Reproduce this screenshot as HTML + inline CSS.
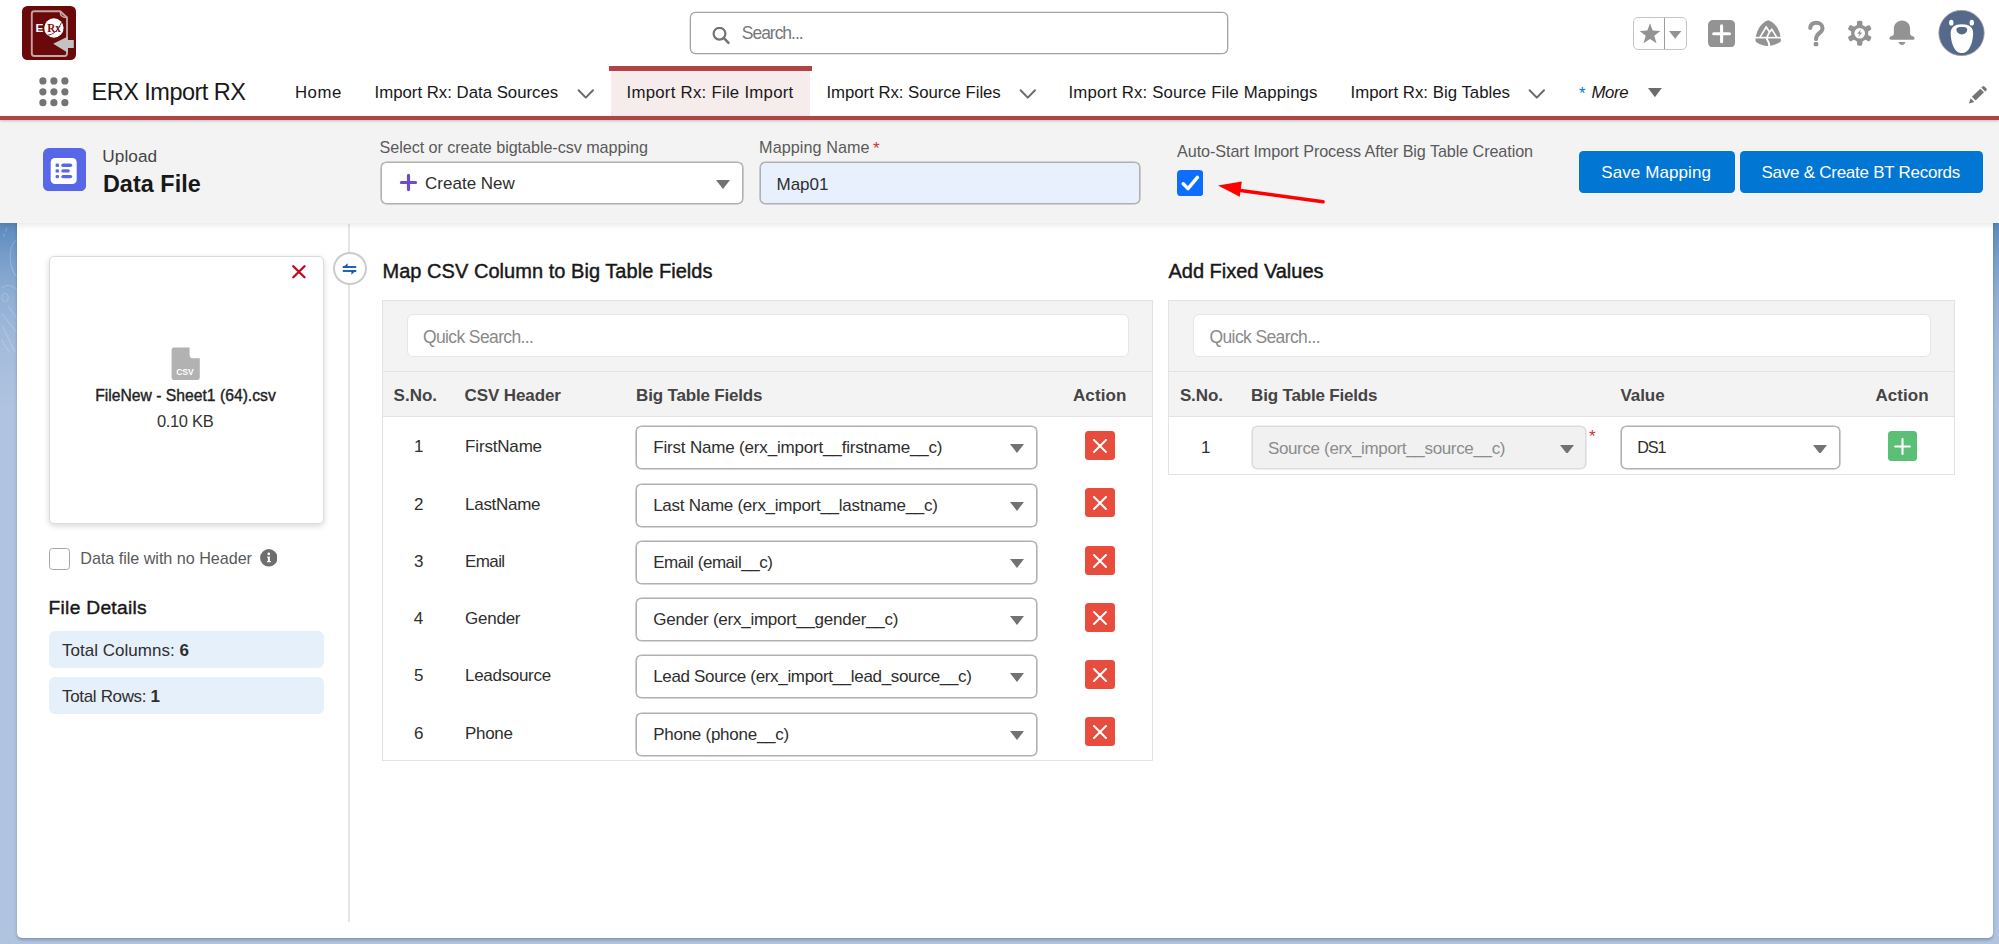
<!DOCTYPE html>
<html lang="en">
<head>
<meta charset="utf-8">
<title>ERX Import RX - File Import</title>
<style>
*{box-sizing:border-box;margin:0;padding:0}
html,body{width:1999px;height:944px;overflow:hidden}
body{position:relative;font-family:"Liberation Sans",sans-serif;background:linear-gradient(180deg,#5a8abd 224px,#789ecb 258px,#92b0d5 300px,#a5bcdc 350px,#b0c4e0 410px,#b0c4e0 100%)}
.abs,.t,svg.i{position:absolute}
.t{white-space:pre;line-height:normal;display:block}
/* global header */
#gh{position:absolute;left:0;top:0;width:1999px;height:117px;background:#fff}
#gsearch{position:absolute;left:690px;top:12px;width:537.700px;height:41.600px;border:1px solid #a2a2a2;border-radius:5.500px;background:#fff;box-shadow:0 0 0 .3px #a2a2a2}
#fav{position:absolute;left:1633px;top:16.5px;width:54px;height:33px;border:1px solid #c4c4c4;border-radius:5px}
#fav b{position:absolute;left:30px;top:0;width:1.2px;height:31px;background:#9c9c9c}
#navline{position:absolute;left:0;top:116.300px;width:1999px;height:3.700px;background:#b04346;box-shadow:0 1px 3px rgba(0,0,0,.22)}
#tabon{position:absolute;left:610.800px;top:66.200px;width:199.200px;height:50.500px;background:#f6ecec}
#tabon:before{content:'';position:absolute;left:-1.800px;top:0;width:202.800px;height:4.700px;background:#b04346}
/* page header */
#ph{position:absolute;left:0;top:120px;width:1999px;height:103.300px;background:#f3f3f3;box-shadow:0 2px 6px rgba(0,0,0,.1)}
.sel{position:absolute;height:42.700px;border:1px solid #b0b0b0;border-radius:5.5px;background:#fff;box-shadow:0 0 0 .6px #b0b0b0}
.sel.dis{background:#f1f1f1;border-color:#dcdcdc;box-shadow:0 0 0 .6px #dcdcdc}
.btn{position:absolute;top:150.5px;height:42px;background:#0176d3;border-radius:4.5px}
/* main card */
#card{position:absolute;left:16.5px;top:120px;width:1976.5px;height:818.3px;background:#fff;border-radius:0 0 5px 5px;box-shadow:0 2px 3px rgba(45,55,85,.32)}
#vline{position:absolute;left:348px;top:223.500px;width:2px;height:698.500px;background:#e5e5e5}
#filebox{position:absolute;left:49px;top:256px;width:275px;height:268px;background:#fff;border:1px solid #dcdcdc;border-radius:5px;box-shadow:0 2px 6px rgba(0,0,0,.16)}
#toggle{position:absolute;left:333px;top:252px;width:34px;height:33px;border:2.2px solid #cbcbcb;border-radius:50%;background:#fff}
.chk{position:absolute;border-radius:3.5px}
.pill{position:absolute;left:48.5px;width:275.5px;height:37px;background:#e5f0fb;border-radius:6px}
.panel{position:absolute;top:299.5px;border:1px solid #e3e3e3;background:#fff}
.panel .hd{position:absolute;left:0;top:0;right:0;height:116.6px;background:#f3f3f3;border-bottom:1px solid #e3e3e3}
.panel .hd i{position:absolute;left:0;right:0;top:70.5px;height:1px;background:#e3e3e3}
.qs{position:absolute;top:13px;height:43.400px;background:#fff;border:1px solid #e6e6e6;border-radius:6px}
.xbtn{position:absolute;left:1085px;width:29.5px;height:29.3px;background:#e74c3c;border-radius:3.500px}
.pbtn{position:absolute;left:1887.8px;top:431.3px;width:29.5px;height:29.4px;background:#5bbf76;border-radius:3.500px}
.sb{-webkit-text-stroke:.42px currentColor}
.sb2{-webkit-text-stroke:.38px currentColor}

</style>
</head>
<body>
<svg class="i" style="left:0;top:223px" width="17" height="180" viewBox="0 223 17 180" aria-hidden="true"><g fill="none" stroke="#fff" stroke-opacity=".2" stroke-width="1.100" stroke-linecap="round">
 <path d="M6.800 228 L6 231.500 M4.600 234 L3.600 236.500"/>
 <path d="M16.500 240 C10 244 8.500 258 12 268 C13.500 272.500 15 275 16.500 276.500"/>
 <path d="M2 288 C6 284 11 285 16.500 289"/>
 <ellipse cx="5" cy="297.500" rx="3.200" ry="4"/>
 <path d="M2 314 L16.500 332 M2.500 326 L15 352 M8 306 L16.500 318 M1.500 340 L9 352"/>
</g></svg><main id="card"></main>
<aside id="left">
 <div id="filebox">
  <svg class="i" style="left:242.200px;top:8.400px" width="13.800" height="13.600" viewBox="0 0 13.800 13.600"><path d="M1.300 1.300 L12.500 12.300 M12.500 1.300 L1.300 12.300" stroke="#c4061f" stroke-width="2.300" stroke-linecap="round"/></svg>
  <svg class="i" style="left:121px;top:90.300px" width="29.400" height="33.600" viewBox="0 0 29.400 33.200" preserveAspectRatio="none">
   <path d="M3 0.600 H18.600 V7.600 Q18.600 11.200 22.200 11.200 H28.800 V30 Q28.800 32.600 26.200 32.600 H3.200 Q0.600 32.600 0.600 30 V3 Q0.600 0.600 3 0.600 Z" fill="#b2b2b2"/>
   <text x="5.200" y="28" font-family="Liberation Sans, sans-serif" font-weight="700" font-size="9.600" fill="#fff" textLength="17.600" lengthAdjust="spacingAndGlyphs">CSV</text>
  </svg>
 </div>
 <span class="t sb2" style="left:95.2px;top:386.6px;font-size:15.7px;color:#222222;letter-spacing:0.005px;">FileNew - Sheet1 (64).csv</span>
 <span class="t" style="left:156.9px;top:411.8px;font-size:16.5px;color:#333333;letter-spacing:-0.320px;">0.10 KB</span>
 <i class="chk" style="left:48.500px;top:548px;width:21.400px;height:21.600px;border:1px solid #a6a6a6;background:#fff"></i>
 <span class="t" style="left:80.3px;top:549.0px;font-size:16.2px;color:#5a5a5a;letter-spacing:-0.046px;">Data file with no Header</span>
 <svg class="i" style="left:259.800px;top:549.400px" width="17.600" height="17.600" viewBox="0 0 17.600 17.600"><circle cx="8.800" cy="8.800" r="8.700" fill="#6e6e6e"/><circle cx="8.800" cy="4.900" r="1.350" fill="#fff"/><path d="M7.200 7.500 H9.900 V12 H10.800 V13.300 H7 V12 H7.900 V8.800 H7.200 Z" fill="#fff"/></svg>
 <span class="t sb" style="left:48.5px;top:597.2px;font-size:19.2px;color:#181818;letter-spacing:0.299px;">File Details</span>
 <div class="pill" style="top:631.300px"></div>
 <span class="t" style="left:62.1px;top:641.2px;font-size:17px;color:#2e2e2e;letter-spacing:0.011px;">Total Columns: <b>6</b></span>
 <div class="pill" style="top:676.800px"></div>
 <span class="t" style="left:62.1px;top:686.8px;font-size:17px;color:#2e2e2e;letter-spacing:-0.347px;">Total Rows: <b>1</b></span>
</aside>
<div id="vline"></div>
<div id="toggle">
 <svg class="i" style="left:7.400px;top:9px" width="15" height="12" viewBox="0 0 15 12"><g stroke="#1b5cb0" stroke-width="1.900" fill="none"><path d="M0.800 4 H14.200"/><path d="M0.800 8 H14.200"/></g><path d="M0.400 4.900 L5.600 0.300 V4.900 Z M14.600 7.100 L9.400 11.700 V7.100 Z" fill="#1b5cb0"/></svg>
</div>

<section id="map">
 <span class="t sb" style="left:382.5px;top:260.2px;font-size:20px;color:#181818;letter-spacing:0.040px;">Map CSV Column to Big Table Fields</span>
 <div class="panel" style="left:382px;width:770.500px;height:461.600px">
  <div class="hd"><i></i><div class="qs" style="left:23.800px;width:722.500px"></div></div>
 </div>
 <span class="t" style="left:422.9px;top:326.6px;font-size:17.5px;color:#8a8a8a;letter-spacing:-0.610px;">Quick Search...</span>
 <span class="t" style="left:393.5px;top:385.6px;font-size:17px;color:#444444;font-weight:700;letter-spacing:0.037px;">S.No.</span>
 <span class="t" style="left:464.5px;top:385.6px;font-size:17px;color:#444444;font-weight:700;letter-spacing:-0.103px;">CSV Header</span>
 <span class="t" style="left:636.1px;top:385.6px;font-size:17px;color:#444444;font-weight:700;letter-spacing:-0.180px;">Big Table Fields</span>
 <span class="t" style="left:1072.9px;top:385.6px;font-size:17px;color:#444444;font-weight:700;letter-spacing:0.142px;">Action</span>
 
 <div class="row">
  <span class="t" style="left:413.9px;top:437.2px;font-size:17px;color:#2e2e2e;letter-spacing:-2.469px;">1</span>
  <span class="t" style="left:465.1px;top:437.2px;font-size:17px;color:#2e2e2e;letter-spacing:-0.176px;">FirstName</span>
  <div class="sel" style="left:636px;top:426px;width:401.400px"></div>
  <span class="t" style="left:653.2px;top:438.4px;font-size:17px;color:#2e2e2e;letter-spacing:-0.178px;">First Name (erx_import__firstname__c)</span>
  <svg class="i" style="left:1010.4px;top:444.4px" width="14" height="8.9" viewBox="0 0 14 8.9"><path d="M0 0 H14 L7.0 8.9 Z" fill="#727272"/></svg>
  <div class="xbtn" style="top:431.2px"><svg class="i" style="left:8.300px;top:8.300px" width="14" height="14" viewBox="0 0 14 14"><path d="M1 1 L13 13 M13 1 L1 13" stroke="#fff" stroke-width="2" stroke-linecap="round"/></svg></div>
 </div>
 <div class="row">
  <span class="t" style="left:414.1px;top:495.2px;font-size:17px;color:#2e2e2e;letter-spacing:-0.869px;">2</span>
  <span class="t" style="left:465.1px;top:495.2px;font-size:17px;color:#2e2e2e;letter-spacing:-0.298px;">LastName</span>
  <div class="sel" style="left:636px;top:484px;width:401.400px"></div>
  <span class="t" style="left:653.2px;top:496.4px;font-size:17px;color:#2e2e2e;letter-spacing:-0.269px;">Last Name (erx_import__lastname__c)</span>
  <svg class="i" style="left:1010.4px;top:502.4px" width="14" height="8.9" viewBox="0 0 14 8.9"><path d="M0 0 H14 L7.0 8.9 Z" fill="#727272"/></svg>
  <div class="xbtn" style="top:488.2px"><svg class="i" style="left:8.300px;top:8.300px" width="14" height="14" viewBox="0 0 14 14"><path d="M1 1 L13 13 M13 1 L1 13" stroke="#fff" stroke-width="2" stroke-linecap="round"/></svg></div>
 </div>
 <div class="row">
  <span class="t" style="left:414.1px;top:552.2px;font-size:17px;color:#2e2e2e;letter-spacing:-0.869px;">3</span>
  <span class="t" style="left:465.1px;top:552.2px;font-size:17px;color:#2e2e2e;letter-spacing:-0.629px;">Email</span>
  <div class="sel" style="left:636px;top:541px;width:401.400px"></div>
  <span class="t" style="left:653.2px;top:553.4px;font-size:17px;color:#2e2e2e;letter-spacing:-0.453px;">Email (email__c)</span>
  <svg class="i" style="left:1010.4px;top:559.4px" width="14" height="8.9" viewBox="0 0 14 8.9"><path d="M0 0 H14 L7.0 8.9 Z" fill="#727272"/></svg>
  <div class="xbtn" style="top:545.5px"><svg class="i" style="left:8.300px;top:8.300px" width="14" height="14" viewBox="0 0 14 14"><path d="M1 1 L13 13 M13 1 L1 13" stroke="#fff" stroke-width="2" stroke-linecap="round"/></svg></div>
 </div>
 <div class="row">
  <span class="t" style="left:413.7px;top:609.2px;font-size:17px;color:#2e2e2e;letter-spacing:-0.269px;">4</span>
  <span class="t" style="left:465.1px;top:609.2px;font-size:17px;color:#2e2e2e;letter-spacing:-0.261px;">Gender</span>
  <div class="sel" style="left:636px;top:598px;width:401.400px"></div>
  <span class="t" style="left:653.2px;top:610.4px;font-size:17px;color:#2e2e2e;letter-spacing:-0.245px;">Gender (erx_import__gender__c)</span>
  <svg class="i" style="left:1010.4px;top:616.4px" width="14" height="8.9" viewBox="0 0 14 8.9"><path d="M0 0 H14 L7.0 8.9 Z" fill="#727272"/></svg>
  <div class="xbtn" style="top:602.5px"><svg class="i" style="left:8.300px;top:8.300px" width="14" height="14" viewBox="0 0 14 14"><path d="M1 1 L13 13 M13 1 L1 13" stroke="#fff" stroke-width="2" stroke-linecap="round"/></svg></div>
 </div>
 <div class="row">
  <span class="t" style="left:414.1px;top:666.2px;font-size:17px;color:#2e2e2e;letter-spacing:-0.869px;">5</span>
  <span class="t" style="left:465.1px;top:666.2px;font-size:17px;color:#2e2e2e;letter-spacing:-0.316px;">Leadsource</span>
  <div class="sel" style="left:636px;top:655px;width:401.400px"></div>
  <span class="t" style="left:653.2px;top:667.4px;font-size:17px;color:#2e2e2e;letter-spacing:-0.333px;">Lead Source (erx_import__lead_source__c)</span>
  <svg class="i" style="left:1010.4px;top:673.4px" width="14" height="8.9" viewBox="0 0 14 8.9"><path d="M0 0 H14 L7.0 8.9 Z" fill="#727272"/></svg>
  <div class="xbtn" style="top:660px"><svg class="i" style="left:8.300px;top:8.300px" width="14" height="14" viewBox="0 0 14 14"><path d="M1 1 L13 13 M13 1 L1 13" stroke="#fff" stroke-width="2" stroke-linecap="round"/></svg></div>
 </div>
 <div class="row">
  <span class="t" style="left:414.1px;top:724.2px;font-size:17px;color:#2e2e2e;letter-spacing:-0.669px;">6</span>
  <span class="t" style="left:465.1px;top:724.2px;font-size:17px;color:#2e2e2e;letter-spacing:-0.343px;">Phone</span>
  <div class="sel" style="left:636px;top:713px;width:401.400px"></div>
  <span class="t" style="left:653.2px;top:725.4px;font-size:17px;color:#2e2e2e;letter-spacing:-0.259px;">Phone (phone__c)</span>
  <svg class="i" style="left:1010.4px;top:731.4px" width="14" height="8.9" viewBox="0 0 14 8.9"><path d="M0 0 H14 L7.0 8.9 Z" fill="#727272"/></svg>
  <div class="xbtn" style="top:716.5px"><svg class="i" style="left:8.300px;top:8.300px" width="14" height="14" viewBox="0 0 14 14"><path d="M1 1 L13 13 M13 1 L1 13" stroke="#fff" stroke-width="2" stroke-linecap="round"/></svg></div>
 </div>
</section>

<section id="fixed">
 <span class="t sb" style="left:1168.5px;top:260.2px;font-size:20px;color:#181818;letter-spacing:-0.019px;">Add Fixed Values</span>
 <div class="panel" style="left:1168.400px;width:786.500px;height:175.400px">
  <div class="hd"><i></i><div class="qs" style="left:23.600px;width:738.400px"></div></div>
 </div>
 <span class="t" style="left:1209.5px;top:326.6px;font-size:17.5px;color:#8a8a8a;letter-spacing:-0.610px;">Quick Search...</span>
 <span class="t" style="left:1179.9px;top:385.6px;font-size:17px;color:#444444;font-weight:700;letter-spacing:-0.113px;">S.No.</span>
 <span class="t" style="left:1251.1px;top:385.6px;font-size:17px;color:#444444;font-weight:700;letter-spacing:-0.180px;">Big Table Fields</span>
 <span class="t" style="left:1620.5px;top:385.6px;font-size:17px;color:#444444;font-weight:700;letter-spacing:-0.080px;">Value</span>
 <span class="t" style="left:1875.5px;top:385.6px;font-size:17px;color:#444444;font-weight:700;letter-spacing:0.062px;">Action</span>
 <span class="t" style="left:1201.1px;top:437.6px;font-size:17px;color:#2e2e2e;letter-spacing:-2.669px;">1</span>
 <div class="sel dis" style="left:1251.600px;top:426px;width:334px"></div>
 <span class="t" style="left:1267.9px;top:438.6px;font-size:17px;color:#8c8c8c;letter-spacing:-0.344px;">Source (erx_import__source__c)</span>
 <svg class="i" style="left:1559.5px;top:444.6px" width="14" height="8.9" viewBox="0 0 14 8.9"><path d="M0 0 H14 L7.0 8.9 Z" fill="#727272"/></svg>
 <span class="t" style="left:1588.9px;top:427.0px;font-size:17px;color:#c23934;">*</span>
 <div class="sel" style="left:1621px;top:426px;width:218.800px"></div>
 <span class="t" style="left:1637.3px;top:438.4px;font-size:16.2px;color:#2e2e2e;letter-spacing:-1.150px;">DS1</span>
 <svg class="i" style="left:1813.2px;top:444.6px" width="14" height="8.9" viewBox="0 0 14 8.9"><path d="M0 0 H14 L7.0 8.9 Z" fill="#727272"/></svg>
 <div class="pbtn"><svg class="i" style="left:6.500px;top:6.600px" width="17" height="17" viewBox="0 0 17 17"><path d="M8.500 1.100 V15.900 M1.100 8.500 H15.900" stroke="#fff" stroke-width="2.100" stroke-linecap="round"/></svg></div>
</section>

<section id="ph">
 
</section>
<div id="phc">
 <svg class="i" style="left:43px;top:147.800px" width="43.200" height="43.200" viewBox="0 0 43.200 43.200">
  <rect width="43.200" height="43.200" rx="6" fill="#5867e8"/>
  <rect x="7.700" y="10" width="26" height="26.100" rx="4.200" fill="#fff"/>
  <g fill="#5867e8"><rect x="12.600" y="15.500" width="3.400" height="3.400" rx="1.200"/><rect x="12.600" y="21.200" width="3.400" height="3.400" rx="1.200"/><rect x="12.600" y="26.900" width="3.400" height="3.400" rx="1.200"/>
  <rect x="18.300" y="15.500" width="10.900" height="3.400" rx="1.700"/><rect x="18.300" y="21.200" width="8.500" height="3.400" rx="1.700"/><rect x="18.300" y="26.900" width="10.900" height="3.400" rx="1.700"/></g>
 </svg>
 <span class="t" style="left:102.3px;top:145.8px;font-size:17.2px;color:#444444;letter-spacing:0.066px;">Upload</span>
 <span class="t" style="left:102.9px;top:171.0px;font-size:23.4px;color:#181818;font-weight:700;letter-spacing:0.050px;">Data File</span>

 <span class="t" style="left:379.5px;top:137.5px;font-size:16.2px;color:#5a5a5a;letter-spacing:-0.068px;">Select or create bigtable-csv mapping</span>
 <div class="sel" style="left:381px;top:161.600px;width:362.200px">
  <svg class="i" style="left:17.200px;top:10.800px" width="19" height="19" viewBox="0 0 19 19"><path d="M9.500 2.400 V16.600 M2.400 9.500 H16.600" stroke="#6b4fc8" stroke-width="3.200" stroke-linecap="round"/></svg>
 </div>
 <span class="t" style="left:425.1px;top:174.4px;font-size:17px;color:#2e2e2e;">Create New</span>
 <svg class="i" style="left:716.4px;top:180.2px" width="14" height="8.9" viewBox="0 0 14 8.9"><path d="M0 0 H14 L7.0 8.9 Z" fill="#727272"/></svg>

 <span class="t" style="left:759.1px;top:137.5px;font-size:16.2px;color:#5a5a5a;letter-spacing:0.056px;">Mapping Name</span>
 <span class="t" style="left:872.9px;top:138.6px;font-size:17px;color:#c23934;">*</span>
 <div class="sel" style="left:759.700px;top:161.600px;width:380.100px;background:#e8f0fe"></div>
 <span class="t" style="left:776.5px;top:175.0px;font-size:17px;color:#2e2e2e;">Map01</span>

 <span class="t" style="left:1177.1px;top:142.2px;font-size:16.2px;color:#5a5a5a;letter-spacing:-0.092px;">Auto-Start Import Process After Big Table Creation</span>
 <svg class="i" style="left:1176.600px;top:169.600px" width="26.400" height="26.200" viewBox="0 0 26.400 26.200"><rect width="26.400" height="26.200" rx="4" fill="#0d6efd"/><path d="M6.200 13.800 L11 18.600 L20.400 7.400" fill="none" stroke="#fff" stroke-width="3.400" stroke-linecap="round" stroke-linejoin="round"/></svg>
 <!-- red annotation arrow -->
 <svg class="i" style="left:1214px;top:176px" width="114" height="30" viewBox="1214 176 114 30"><path d="M1240.500 190.500 L1323 201.700" stroke="#ff0000" stroke-width="3.600" stroke-linecap="round"/><path d="M1218 185.600 L1241.800 181.400 L1239.800 196.800 Z" fill="#ff0000"/></svg>

 <div class="btn" style="left:1579.200px;width:155.400px"></div>
 <span class="t" style="left:1601.2px;top:163.4px;font-size:17px;color:#ffffff;letter-spacing:0.101px;">Save Mapping</span>
 <div class="btn" style="left:1739.600px;width:243.200px"></div>
 <span class="t" style="left:1761.5px;top:163.4px;font-size:17px;color:#ffffff;letter-spacing:-0.258px;">Save &amp; Create BT Records</span>
</div>

<header id="gh">
 <!-- app logo -->
 <svg class="i" style="left:21.5px;top:6px" width="54" height="54" viewBox="0 0 54 54">
  <rect x="0" y="0" width="54" height="54" rx="5.5" fill="#6b0809"/>
  <path d="M12.2 5.2 H38.2 L45 11.5 V47.6 Q45 50 42.6 50 H12.2 Q9.8 50 9.8 47.6 V7.6 Q9.8 5.2 12.2 5.2 Z" fill="none" stroke="#c4a5a5" stroke-width="1.9"/>
  <path d="M38.4 6 Q38 11.4 44.4 11.6" fill="none" stroke="#c9aaaa" stroke-width="1.4"/>
  <circle cx="31.9" cy="22" r="9.7" fill="#fff"/>
  <text x="13.6" y="25.9" font-family="Liberation Sans, sans-serif" font-weight="700" font-size="11.8" fill="#fff">E</text>
  <text x="25.200" y="26.400" font-family="Liberation Serif, serif" font-weight="700" font-size="12.400" fill="#7a1416" textLength="13.600" lengthAdjust="spacingAndGlyphs">Rx</text>
  <path d="M25.500 29.200 Q34 29 39.500 16.500" fill="none" stroke="#7a1416" stroke-width=".9"/>
  <path d="M31.2 37.7 L45.9 30.6 V33.9 H51.8 V41.9 H45.9 V46.8 Z" fill="#c2c2c2"/>
 </svg>
 <!-- global search -->
 <div id="gsearch">
  <svg class="i" style="left:21px;top:13.500px" width="20" height="20" viewBox="0 0 20 20"><circle cx="7.500" cy="6.700" r="5.900" fill="none" stroke="#747474" stroke-width="2.200"/><path d="M11.900 11.100 L16.500 15.800" stroke="#747474" stroke-width="2.500" stroke-linecap="round"/></svg>
 </div>
 <span class="t" style="left:741.8px;top:23.4px;font-size:17.5px;color:#787878;letter-spacing:-1.031px;">Search...</span>
 <!-- favourites -->
 <div id="fav"><b></b>
  <svg class="i" style="left:4.5px;top:5.5px" width="22" height="21" viewBox="0 0 22 21"><path d="M11 0.3 L13.7 7.6 L21.4 7.9 L15.3 12.7 L17.5 20.2 L11 15.9 L4.5 20.2 L6.7 12.7 L0.6 7.9 L8.3 7.6 Z" fill="#939393"/></svg>
  <svg class="i" style="left:35.3px;top:13.8px" width="12.4" height="7.8" viewBox="0 0 12.4 7.8"><path d="M0 0 H12.4 L6.2 7.8 Z" fill="#939393"/></svg>
 </div>
 <!-- global actions: add, trailhead, help, setup, notifications -->
 <svg class="i" style="left:1708.3px;top:19.5px" width="27.2" height="27.4" viewBox="0 0 27.2 27.4"><rect width="27.2" height="27.4" rx="5" fill="#939393"/><path d="M5.7 13.8 H21.5 M13.6 5.9 V21.7" stroke="#fff" stroke-width="3.1" stroke-linecap="round"/></svg>
 <svg class="i" style="left:1754.500px;top:20px" width="26.400" height="26.400" viewBox="1754.500 20 26.400 26.400">
  <path d="M1767.700 20.300 C1774.200 22.600 1779 28.600 1780.300 38.500 L1780.300 41.400 C1777 44.200 1772.400 45.900 1767.700 45.900 C1763 45.900 1758.400 44.200 1755.100 41.400 L1755.100 38.500 C1756.400 28.600 1761.200 22.600 1767.700 20.300 Z" fill="#939393"/>
  <path d="M1754 37.650 H1782" stroke="#fff" stroke-width="1.600"/>
  <path d="M1759.400 37.400 L1765.700 27.100 L1769.100 32 L1771.300 29.400 L1776.300 37.400 M1769.100 32 L1766.300 37.400" fill="none" stroke="#fff" stroke-width="1.700" stroke-linejoin="miter"/>
  <path d="M1766.200 38 C1766.200 40.600 1769.200 41.600 1768.700 46.200" fill="none" stroke="#fff" stroke-width="2"/>
 </svg>
 <svg class="i" style="left:1806px;top:19.600px" width="20" height="27.400" viewBox="0 0 20 27.400"><path d="M4.200 8.100 C4.600 4.700 6.900 2.800 10.200 2.800 C13.800 2.800 16.500 5 16.500 8.200 C16.500 13.200 10 12.600 10 19.200" fill="none" stroke="#939393" stroke-width="4" stroke-linecap="round"/><rect x="7.700" y="22.100" width="4.600" height="4.200" rx="1.300" fill="#939393"/></svg>
 <svg class="i" style="left:1846.5px;top:20px" width="25.4" height="26.4" viewBox="-12.700 -13.200 25.4 26.4">
  <g fill="#939393">
   <circle r="8.6"/>
   <g id="tooth"><rect x="-2.700" y="-12.500" width="5.400" height="6" rx="1.6"/></g>
   <rect x="-2.700" y="-12.500" width="5.400" height="6" rx="1.6" transform="rotate(60)"/>
   <rect x="-2.700" y="-12.500" width="5.400" height="6" rx="1.6" transform="rotate(120)"/>
   <rect x="-2.700" y="-12.500" width="5.400" height="6" rx="1.6" transform="rotate(180)"/>
   <rect x="-2.700" y="-12.500" width="5.400" height="6" rx="1.6" transform="rotate(240)"/>
   <rect x="-2.700" y="-12.500" width="5.400" height="6" rx="1.6" transform="rotate(300)"/>
  </g>
  <circle r="5.300" fill="#fff"/>
  <path d="M1.400 -4 L-2.600 0.600 H-0.200 L-1.400 4 L2.600 -0.600 H0.200 Z" fill="#939393"/>
 </svg>
 <svg class="i" style="left:1889px;top:20.4px" width="26" height="26" viewBox="0 0 26 26">
  <path d="M13 0.400 C8.200 0.400 4.900 4 4.900 8.600 V13.600 C4.900 15.200 3.400 16 1.600 16.600 C0.800 16.900 0.500 17.500 0.500 18.200 V18.600 C0.500 19.400 1.100 19.800 1.800 19.800 H24.200 C24.900 19.800 25.500 19.400 25.500 18.600 V18.200 C25.500 17.500 25.200 16.900 24.400 16.600 C22.600 16 21.100 15.200 21.100 13.600 V8.600 C21.100 4 17.800 0.400 13 0.400 Z" fill="#939393"/>
  <path d="M9.600 22.100 H16.400 C16 24 14.700 25.100 13 25.100 C11.300 25.100 10 24 9.600 22.100 Z" fill="#939393"/>
 </svg>
 <!-- user avatar -->
 <svg class="i" style="left:1938px;top:10px" width="47" height="46.400" viewBox="0 0 47 46.400">
  <circle cx="23.500" cy="23" r="22.700" fill="#55698c" stroke="#a9a59b" stroke-width=".8"/>
  <ellipse cx="13.300" cy="12.700" rx="2.200" ry="2.900" fill="#fff"/>
  <ellipse cx="33.800" cy="12.700" rx="2.200" ry="2.900" fill="#fff"/>
  <path d="M23.900 14.300 C31.200 14.300 35.100 17.300 35.100 23 C35.100 30.500 32.200 43.100 23.800 43.100 C15.400 43.100 12.700 30.500 12.700 23 C12.700 17.300 16.600 14.300 23.900 14.300 Z" fill="#fff"/>
  <path d="M18.400 19.600 C18.400 17.600 20.600 17 23.800 17 C27 17 29.200 17.600 29.200 19.600 C29.200 22.400 26.600 24.400 23.800 24.400 C21 24.400 18.400 22.400 18.400 19.600 Z" fill="#55698c"/>
 </svg>
</header>

<nav id="nav">
 <div id="tabon"></div>
 <svg class="i" style="left:39px;top:76.800px" width="30" height="30" viewBox="0 0 30 30"><g fill="#747474">
  <circle cx="3.900" cy="3.900" r="3.600"/><circle cx="14.900" cy="3.900" r="3.600"/><circle cx="25.900" cy="3.900" r="3.600"/>
  <circle cx="3.900" cy="14.800" r="3.600"/><circle cx="14.900" cy="14.800" r="3.600"/><circle cx="25.900" cy="14.800" r="3.600"/>
  <circle cx="3.900" cy="25.700" r="3.600"/><circle cx="14.900" cy="25.700" r="3.600"/><circle cx="25.900" cy="25.700" r="3.600"/></g></svg>
 <span class="t" style="left:91.5px;top:79.0px;font-size:23.5px;color:#181818;letter-spacing:-0.510px;">ERX Import RX</span>
 <span class="t" style="left:295.0px;top:83.0px;font-size:16.8px;color:#181818;letter-spacing:0.495px;">Home</span>
 <span class="t" style="left:374.5px;top:83.0px;font-size:16.8px;color:#181818;">Import Rx: Data Sources</span><svg class="i" style="left:576.5px;top:88px" width="18" height="12" viewBox="0 0 18 12"><path d="M1.6 2.2 L8.8 9.6 L16 2.2" fill="none" stroke="#6b6b6b" stroke-width="2" stroke-linecap="round" stroke-linejoin="round"/></svg>
 <span class="t" style="left:626.5px;top:83.0px;font-size:16.8px;color:#181818;letter-spacing:0.258px;">Import Rx: File Import</span>
 <span class="t" style="left:826.5px;top:83.0px;font-size:16.8px;color:#181818;letter-spacing:-0.049px;">Import Rx: Source Files</span><svg class="i" style="left:1018.9px;top:88px" width="18" height="12" viewBox="0 0 18 12"><path d="M1.6 2.2 L8.8 9.6 L16 2.2" fill="none" stroke="#6b6b6b" stroke-width="2" stroke-linecap="round" stroke-linejoin="round"/></svg>
 <span class="t" style="left:1068.5px;top:83.0px;font-size:16.8px;color:#181818;letter-spacing:0.155px;">Import Rx: Source File Mappings</span>
 <span class="t" style="left:1350.5px;top:83.0px;font-size:16.8px;color:#181818;letter-spacing:0.016px;">Import Rx: Big Tables</span><svg class="i" style="left:1527.9px;top:88px" width="18" height="12" viewBox="0 0 18 12"><path d="M1.6 2.2 L8.8 9.6 L16 2.2" fill="none" stroke="#6b6b6b" stroke-width="2" stroke-linecap="round" stroke-linejoin="round"/></svg>
 <span class="t" style="left:1579.0px;top:83.6px;font-size:16.5px;color:#0176d3;">*</span>
 <span class="t" style="left:1591.5px;top:83.0px;font-size:16.8px;color:#181818;font-style:italic;letter-spacing:-0.411px;">More</span>
 <svg class="i" style="left:1648px;top:87.7px" width="13.8" height="9.2" viewBox="0 0 13.8 9.2"><path d="M0 0 H13.8 L6.9 9.2 Z" fill="#6b6b6b"/></svg>
 <svg class="i" style="left:1968px;top:85px" width="20" height="20" viewBox="0 0 20 20"><g fill="#747474">
  <path d="M1 18.600 L2.600 13.200 L6.400 17 Z"/>
  <path d="M3.900 11.800 L12.300 3.700 L16 7.300 L7.600 15.500 Z"/>
  <path d="M13.300 2.600 L14.500 1.400 Q15.400 0.500 16.400 1.400 L18.500 3.500 Q19.400 4.500 18.500 5.300 L17.200 6.500 Z"/></g></svg>
 <div id="navline"></div>
</nav>

</body>
</html>
